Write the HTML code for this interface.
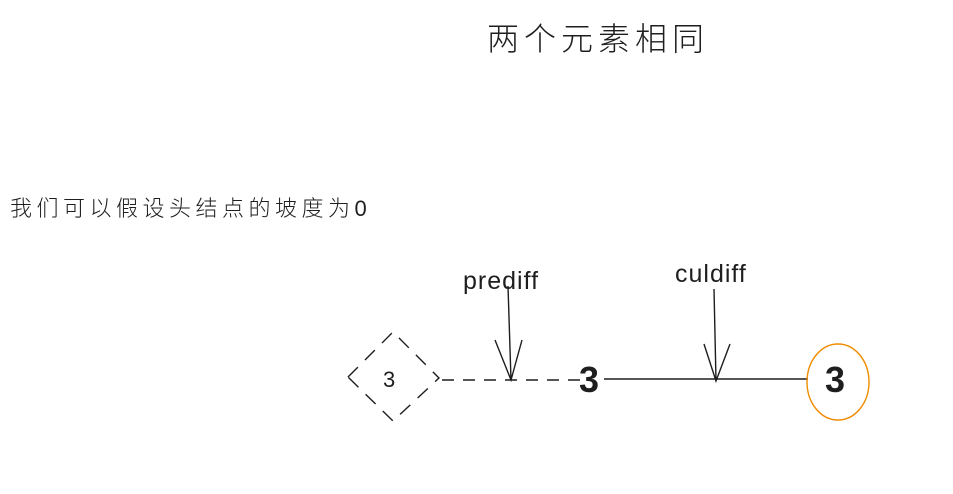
<!DOCTYPE html>
<html><head><meta charset="utf-8"><style>
html,body{margin:0;padding:0;background:#fff;width:953px;height:494px;overflow:hidden}
svg{display:block}
text{fill:#1e1e1e}
</style></head><body>
<svg width="953" height="494" viewBox="0 0 953 494" xmlns="http://www.w3.org/2000/svg">
<text x="487" y="50" font-family="'Liberation Sans','Noto Sans CJK SC',sans-serif" font-size="32" font-weight="300" letter-spacing="5">两个元素相同</text>
<text x="10" y="216" font-family="'Liberation Sans','Noto Sans CJK SC',sans-serif" font-size="22" font-weight="300" letter-spacing="4.5">我们可以假设头结点的坡度为0</text>
<text x="463" y="289" font-family="'Liberation Sans',sans-serif" font-size="25" letter-spacing="1">prediff</text>
<text x="675" y="282" font-family="'Liberation Sans',sans-serif" font-size="25" letter-spacing="1">culdiff</text>
<g stroke="#1e1e1e" stroke-width="1.4" fill="none">
<path d="M348 377 L393 332 L439 378 L393 421 Z" stroke-dasharray="14 10"/>
<path d="M442 380 L580 380" stroke-dasharray="12 9"/>
<path d="M604 379 L808 379"/>
<path d="M508 286 L511 380 M495 340 L511 380 L522 340"/>
<path d="M714 289 L716 381 M704 344 L716 381 L730 344"/>
</g>
<ellipse cx="838" cy="382" rx="31" ry="38" fill="none" stroke="#f08c00" stroke-width="1.4"/>
<text x="383" y="387" font-family="'Liberation Sans',sans-serif" font-size="22">3</text>
<text x="579" y="392" font-family="'Liberation Sans',sans-serif" font-size="36" font-weight="bold">3</text>
<text x="825" y="392" font-family="'Liberation Sans',sans-serif" font-size="36" font-weight="bold">3</text>
</svg>
</body></html>
